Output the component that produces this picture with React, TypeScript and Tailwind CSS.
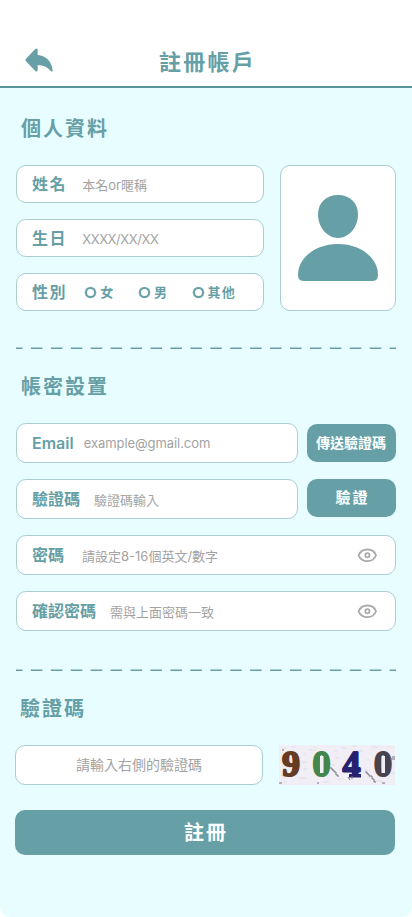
import type { ReactNode } from 'react';

function SectionTitle({ children }: { children: ReactNode }) {
  return <h2 className="h-7 pl-[5px] text-[20px] leading-7 font-bold tracking-[2px]">{children}</h2>;
}

function Field({ label, hint, className, hintClass = 'mt-[2px]', spaced, children }: {
  label: string;
  hint?: string;
  className: string;
  hintClass?: string;
  spaced?: boolean;
  children?: ReactNode;
}) {
  return (
    <div className={`flex items-center rounded-[10px] border border-[#a9cdd1] bg-white pl-[15px] ${className}`}>
      <span className={`text-[16px] leading-6 font-semibold whitespace-nowrap ${spaced ? 'tracking-[1.6px]' : ''}`}>{label}</span>
      {hint && <span className={`text-[13px] leading-5 whitespace-nowrap text-[#a3a3a3] ${hintClass}`}>{hint}</span>}
      {children}
    </div>
  );
}

function Radio({ label }: { label: string }) {
  return (
    <span className="flex items-center gap-1">
      <span className="size-[11px] rounded-full border-2 border-[#669fa6] ring-[0.3px] ring-[#669fa6]" />
      <span className="text-[13px] leading-5 font-bold tracking-[1.200px]">{label}</span>
    </span>
  );
}

function Eye() {
  return (
    <svg className="mr-[18px] ml-auto h-[14px] w-5" viewBox="0 0 20 14" fill="none" stroke="#aaaaaa" strokeWidth="1.800">
      <path d="M1.500 7.300C3.200 3.600 6.300 1.500 10.500 1.500S17.600 3.600 19 7.300C17.600 11 14.500 13.100 10.500 13.100S3.200 11 1.500 7.300Z" strokeLinejoin="round" />
      <circle cx="10.400" cy="7.300" r="2.100" />
    </svg>
  );
}

function Divider() {
  return (
    <svg className="block h-[2px] w-[380px]" viewBox="0 0 380 2">
      <path d="M0 1.250H380" stroke="#669fa6" strokeWidth="1.5" strokeDasharray="11.500 8.430" strokeDashoffset="5" />
    </svg>
  );
}

function Captcha() {
  return (
    <svg className="h-10 w-[116px]" viewBox="0 0 116 40">
      <rect width="116" height="40" fill="#f1eff5" />
      <g fill="none" stroke="#dedbe6" strokeWidth="1">
        <path d="M2 3h5M13 2h4M30 5h6M62 3h5M79 6h5M92 2h7M23 17h5M56 13h4M85 25h6M20 33h7M44 37h6M95 36h8M4 37h4M24 24h4M112 28h4M59 34h6" />
        <path d="M24 9h3M55 6h4M87 15h4M2 30h3M34 2h4M73 1h5M107 2h5M52 20h4M88 32h3" stroke="#e5e0e3" />
      </g>
      <g fontFamily='"Liberation Serif", serif' fontSize="36" fontWeight="700" strokeWidth="2" strokeLinejoin="bevel">
        <text x="3" y="31" fill="#653c23" stroke="#653c23">9</text>
        <text x="33.500" y="31" fill="#43864b" stroke="#43864b">0</text>
        <text x="63.500" y="31" fill="#252271" stroke="#252271">4</text>
        <text x="95" y="31" fill="#49434d" stroke="#49434d">0</text>
      </g>
      <path d="M70 29h12v3.500H70z" fill="#252271" />
      <path d="M41 11h3.500v17H41zM102.500 11h3.500v17h-3.500z" fill="#f1eff5" />
      <g fill="none" stroke="#77727f" strokeWidth="1">
        <path d="M51 23h2v2h2v2h2v3h2v2" />
        <path d="M86 27h2v2h2v2h3v3h2v3h2" />
        <path d="M69 32l2 3M73 34v-3M111 14h5M113 12h3M3 5h2M0 38h3M38 38h2M103 38h3" />
      </g>
    </svg>
  );
}

export default function App() {
  return (
    <div className="h-[917px] w-[412px] overflow-hidden bg-white font-[Inter,'Noto_Sans_CJK_TC',sans-serif] text-[#669fa6]">
      <div className="flex h-full flex-col rounded-b-[10px] bg-[#e8fdff]">
        <header className="grid h-[88px] shrink-0 grid-cols-[1fr_auto_1fr] items-center border-b-2 border-[#5a9398] bg-white pt-[37px]">
          <svg className="mb-[3px] ml-[25px] h-[25px] w-7" viewBox="0 0 84 75" fill="#669fa6">
            <path d="M31 3Q36 -1 38 4V21C64 23 81 42 83 68Q82 73 77 69C68 57 55 51 38 51V67Q36 73 31 69L3 40Q0 36 3 32Z" />
          </svg>
          <h1 className="pt-px pl-[3px] text-[22px] leading-8 font-bold tracking-[2.200px]">註冊帳戶</h1>
        </header>

        <main className="px-4 pt-[27px]">
          <SectionTitle>個人資料</SectionTitle>
          <div className="mt-[22px] flex gap-4">
            <div className="flex w-[248px] flex-col gap-4">
              <Field label="姓名" hint="本名or暱稱" spaced className="h-[38px] gap-[15px]" />
              <Field label="生日" hint="XXXX/XX/XX" spaced className="h-[38px] gap-[15px]" hintClass="mt-[2px] tracking-[-0.4px]" />
              <Field label="性別" spaced className="h-[38px] gap-[18px]">
                <div className="flex gap-[24.500px]">
                  <Radio label="女" />
                  <Radio label="男" />
                  <Radio label="其他" />
                </div>
              </Field>
            </div>
            <div className="flex h-[146px] w-[116px] items-center justify-center rounded-[10px] border border-[#a9cdd1] bg-white">
              <svg className="h-[86px] w-20" viewBox="0 0 80 86" fill="#669fa6">
                <path d="M40 0C52 0 60 8 60 19.500C60 32 51 43 40 43S20 32 20 19.500C20 8 28 0 40 0Z" />
                <path d="M40 49C63 49 80 63 80 80Q80 86 74 86H6Q0 86 0 80C0 63 17 49 40 49Z" />
              </svg>
            </div>
          </div>

          <div className="mt-9"><Divider /></div>

          <div className="mt-[24px]"><SectionTitle>帳密設置</SectionTitle></div>
          <div className="mt-[22px] flex flex-col gap-4">
            <div className="flex h-10 items-center gap-[9px]">
              <Field label="Email" hint="example@gmail.com" className="h-10 w-[282px] gap-[10px]" hintClass="tracking-[-0.06px]" />
              <button className="h-[38px] w-[89px] rounded-[10px] bg-[#669fa6] pr-px pb-[2px] text-[14px] font-bold whitespace-nowrap text-white">傳送驗證碼</button>
            </div>
            <div className="flex h-10 items-start gap-[9px]">
              <Field label="驗證碼" hint="驗證碼輸入" className="h-10 w-[282px] gap-[14px]" />
              <button className="h-[38px] w-[89px] rounded-[10px] bg-[#669fa6] pl-[2px] text-[15px] font-bold tracking-[2px] text-white">驗證</button>
            </div>
            <Field label="密碼" hint="請設定8-16個英文/數字" className="h-10 gap-[18px]"><Eye /></Field>
            <Field label="確認密碼" hint="需與上面密碼一致" className="h-10 gap-[14px]"><Eye /></Field>
          </div>

          <div className="mt-[38px]"><Divider /></div>

          <div className="-ml-px">
            <div className="mt-[24px]"><SectionTitle>驗證碼</SectionTitle></div>
            <div className="mt-[22px] flex gap-4">
              <div className="flex h-10 w-[248px] items-center justify-center rounded-[10px] border border-[#a9cdd1] bg-white pb-[2px] text-[14px] text-[#a3a3a3]">請輸入右側的驗證碼</div>
              <Captcha />
            </div>
            <button className="mt-[25px] h-[45px] w-[380px] rounded-[10px] bg-[#669fa6] pl-[2px] text-[20px] font-bold tracking-[2px] text-white">註冊</button>
          </div>
        </main>
      </div>
    </div>
  );
}
